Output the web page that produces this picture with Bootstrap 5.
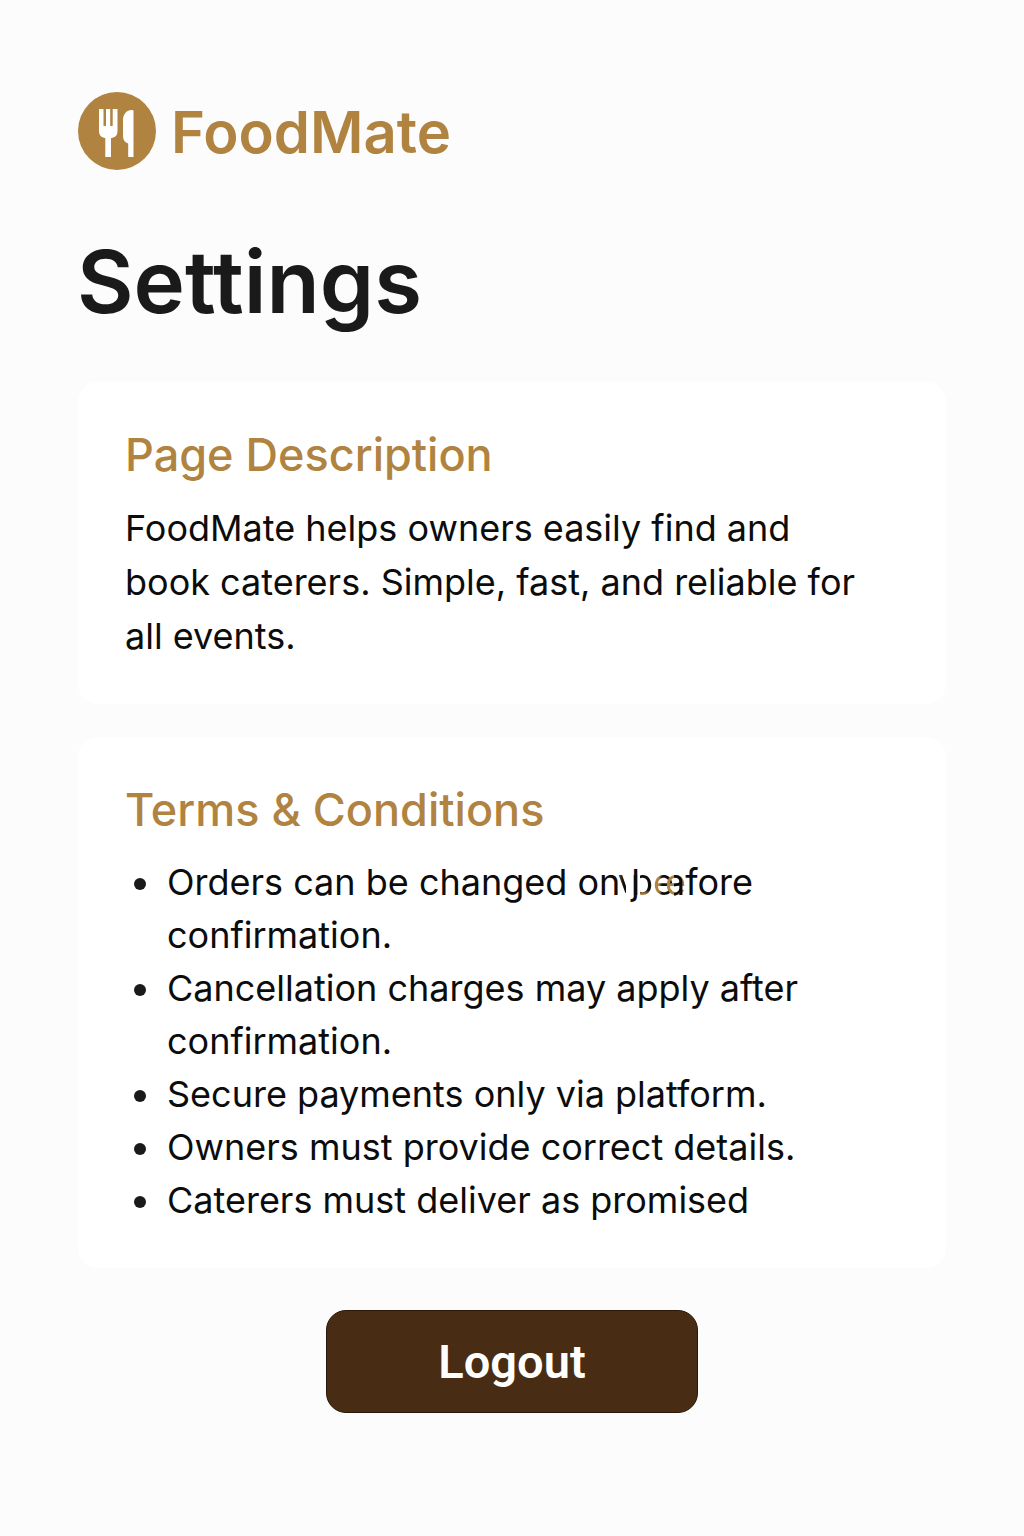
<!DOCTYPE html>
<html lang="en">
<head>
<meta charset="utf-8">
<meta name="viewport" content="width=device-width, initial-scale=1">
<title>FoodMate – Settings</title>
<link href="https://cdn.jsdelivr.net/npm/bootstrap@5.3.0/dist/css/bootstrap.min.css" rel="stylesheet">
<style>
body { font-family: Inter, "Liberation Sans", sans-serif; background: #fcfcfc; color: #0c0c0c; }
.page { padding: 92px 78px 120px; }
.brand { color: #b08340; gap: 15px; margin-bottom: 67px; }
.brand-logo { width: 78px; height: 78px; }
.brand-name { font-size: 58px; line-height: 78px; font-weight: 600; padding-top: 1px; }
.page-title { font-size: 87px; line-height: 88px; font-weight: 600; color: #1a1a1a; margin: 0 0 56px -1px; }
.panel { background: #fff; border-radius: 20px; padding: 46px 72px 41px 47px; margin-bottom: 33px; }
.panel-title { font-size: 45px; line-height: 54px; font-weight: 500; color: #b08340; margin-bottom: 19px; }
.panel-text { font-size: 36px; line-height: 54px; }
.terms { font-size: 36px; line-height: 53px; padding-left: 42px; list-style: none; }
.terms li::before { content: ""; display: inline-block; width: 12px; height: 12px; border-radius: 50%; background: #1a1a1a; margin: 0 21px 0 -33px; vertical-align: 5px; }
/* letters of the first term that run into each other */
.overlap { white-space: nowrap; }
.overlap span { display: inline-block; color: transparent; background-clip: text; -webkit-background-clip: text; background-image: linear-gradient(#0c0c0c, #0c0c0c); }
.overlap .ov-l { margin-left: 11px; color: #0c0c0c; background-image: none; }
.overlap .ov-l::after { content: "ȷ"; margin-left: -9px; }
.overlap .ov-y { margin-left: -22px; clip-path: inset(0 12px 16px 0); background-image: linear-gradient(90deg, #6b4c22, #0c0c0c 6px); }
.overlap .ov-b { margin-left: -7px; clip-path: inset(0 0 0 9px); background-image: linear-gradient(#0c0c0c 34px, #b08340 38px); }
.overlap .ov-e { background-image: linear-gradient(90deg, #b08340 6px, #0c0c0c 9px); }
.overlap .ov-g { margin-left: -9px; background-image: linear-gradient(#b08340, #b08340); }
.overlap .ov-a { margin-left: -21px; clip-path: inset(0 0 0 9px); }
.btn-logout { --bs-btn-color: #fff; --bs-btn-bg: #482d14; --bs-btn-border-color: #2b1707; --bs-btn-hover-color: #fff; --bs-btn-hover-bg: #382210; --bs-btn-border-radius: 20px; font-family: Roboto, "Liberation Sans", sans-serif; font-size: 47px; line-height: 61px; font-weight: 600; width: 372px; max-width: 100%; padding: 20px; }
.actions { margin-top: 42px; }
</style>
</head>
<body>
<main class="page">
  <header class="brand d-flex align-items-start">
    <svg class="brand-logo" viewBox="0 0 78 78" aria-hidden="true">
      <circle cx="39" cy="39" r="39" fill="#b08340"/>
      <path fill="#fff" d="M21 17H25.500V34H28V17H32.200V34H34.700V17H39.500V39C39.500 43 37.500 45.700 33 46V65H27.300V46C23.500 45.700 21 43 21 39Z"/>
      <path fill="#fff" d="M55.500 18.500V65H50.200V51.500C47 50.500 45 48 45 44V28C45 22 49 18 53.500 18Q55 18 55.500 18.500Z"/>
    </svg>
    <span class="brand-name">FoodMate</span>
  </header>
  <h1 class="page-title">Settings</h1>
  <section class="panel">
    <h2 class="panel-title">Page Description</h2>
    <p class="panel-text mb-0">FoodMate helps owners easily find and book caterers. Simple, fast, and reliable for all events.</p>
  </section>
  <section class="panel mb-0">
    <h2 class="panel-title">Terms &amp; Conditions</h2>
    <ul class="terms mb-0">
      <li>Orders can be changed <span class="overlap">on<span class="ov-l">l</span><span class="ov-y">y</span><span class="ov-b">b</span><span class="ov-e">e</span><span class="ov-g">e</span><span class="ov-a">a</span>fore</span> confirmation.</li>
      <li>Cancellation charges may apply after confirmation.</li>
      <li>Secure payments only via platform.</li>
      <li>Owners must provide correct details.</li>
      <li>Caterers must deliver as promised</li>
    </ul>
  </section>
  <div class="actions text-center">
    <button type="button" class="btn btn-logout">Logout</button>
  </div>
</main>
<script src="https://cdn.jsdelivr.net/npm/bootstrap@5.3.0/dist/js/bootstrap.bundle.min.js"></script>
</body>
</html>
